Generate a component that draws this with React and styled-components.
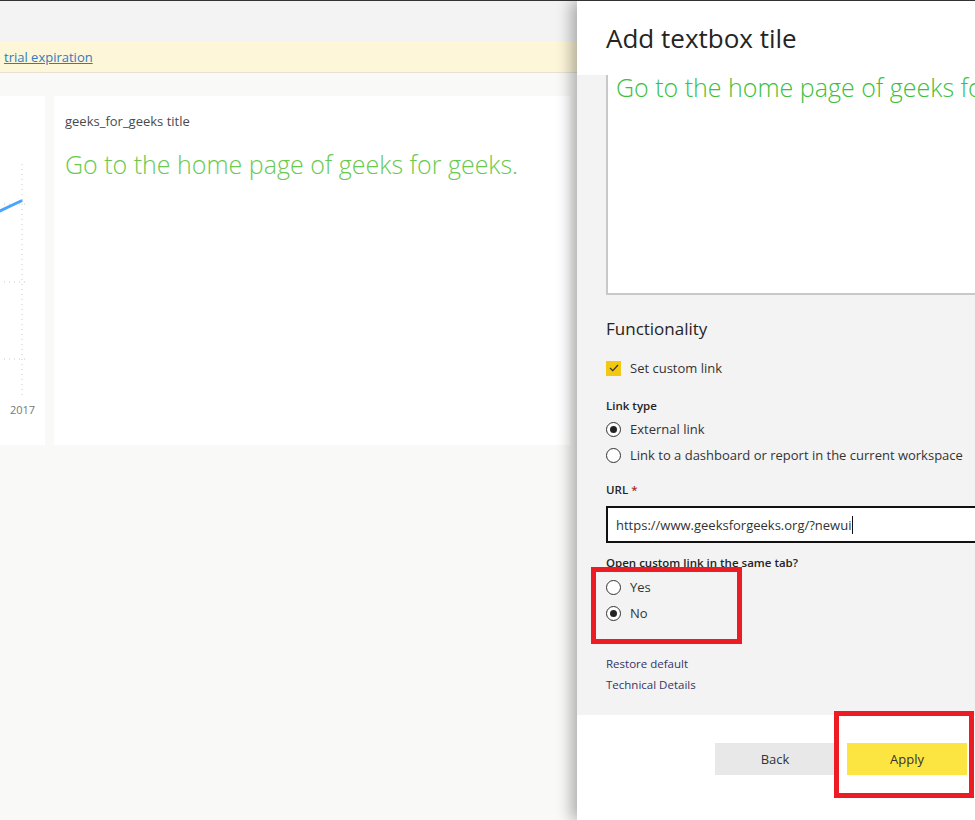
import React, { useState } from "react";
import styled, { createGlobalStyle } from "styled-components";

const GlobalStyle = createGlobalStyle`
  html, body {
    margin: 0;
    padding: 0;
    height: 100%;
    overflow: hidden;
  }
  body {
    font-family: "Open Sans", "Noto Sans", "Liberation Sans", sans-serif;
    color: #333;
  }
`;

const Screen = styled.div`
  display: flex;
  width: 975px;
  height: 820px;
  border-top: 1px solid #333;
  box-sizing: border-box;
  overflow: hidden;
`;

const Workspace = styled.div`
  flex: 0 0 577px;
  display: flex;
  flex-direction: column;
  background: #f9f9f8;
`;

const TopBar = styled.div`
  height: 40px;
  background: #f3f3f3;
`;

const Banner = styled.div`
  height: 31px;
  background: #fdf6d9;
  border-bottom: 1px solid #e6e3d6;
  display: flex;
  align-items: center;
  padding-left: 4px;
  font-size: 13px;

  a {
    color: #2f7bbf;
    text-decoration: underline;
  }
`;

const TileRow = styled.div`
  display: flex;
  gap: 9px;
  padding-top: 23px;
  height: 349px;
`;

const Tile = styled.div`
  background: #fff;
  flex: ${(p) => (p.$w ? `0 0 ${p.$w}px` : "1")};
  padding: ${(p) => (p.$w ? "0" : "16px 11px")};
  margin-right: ${(p) => (p.$w ? "0" : "7px")};
`;

const TileTitle = styled.div`
  font-size: 13px;
  color: #4a4a4a;
`;

const TileText = styled.div`
  margin-top: 17px;
  font-size: 25px;
  font-weight: 300;
  color: #69c94e;
  white-space: nowrap;
`;

const ChartSvg = styled.svg`
  display: block;
`;

const Panel = styled.div`
  flex: 0 0 398px;
  position: relative;
  display: flex;
  flex-direction: column;
  background: #fff;
  box-shadow: -6px 0 14px rgba(0, 0, 0, 0.3);
  overflow: hidden;
`;

const PanelHeader = styled.div`
  height: 74px;
  padding-left: 29px;
  display: flex;
  align-items: center;
  font-size: 26px;
  color: #252423;
  box-sizing: border-box;
`;

const PanelBody = styled.div`
  background: #f3f3f3;
  height: 640px;
  padding-left: 29px;
  box-sizing: border-box;
`;

const TextArea = styled.div`
  width: 420px;
  height: 220px;
  background: #fff;
  border-left: 2px solid #c8c8c8;
  border-bottom: 2px solid #c8c8c8;
  box-sizing: border-box;
  padding: 0 8px;
  font-size: 25px;
  font-weight: 300;
  color: #3dbf3d;
  white-space: nowrap;
  overflow: hidden;
  line-height: 24px;
`;

const SectionTitle = styled.div`
  font-size: 17px;
  margin-top: 22px;
  color: #252423;
`;

const CheckRow = styled.label`
  display: flex;
  align-items: center;
  gap: 9px;
  margin-top: 19px;
  font-size: 13px;
  color: #333;
`;

const CheckBox = styled.span`
  width: 15px;
  height: 15px;
  background: #f2c811;
  display: flex;
  align-items: center;
  justify-content: center;
`;

const FieldLabel = styled.div`
  font-size: 11.5px;
  font-weight: 600;
  color: #252423;
  margin-top: ${(p) => p.$top || 0}px;
  margin-bottom: ${(p) => p.$bottom || 0}px;

  em {
    font-style: normal;
    color: #a4262c;
  }
`;

const RadioRow = styled.label`
  display: flex;
  align-items: center;
  gap: 9px;
  height: 26px;
  font-size: 13px;
  color: #333;
  white-space: nowrap;
`;

const RadioDot = styled.span`
  width: 15px;
  height: 15px;
  border: 1px solid #333;
  border-radius: 50%;
  box-sizing: border-box;
  background: #fff;
  display: flex;
  align-items: center;
  justify-content: center;

  &::after {
    content: "";
    width: 7px;
    height: 7px;
    border-radius: 50%;
    background: ${(p) => (p.$on ? "#252423" : "transparent")};
  }
`;

const UrlInput = styled.div`
  width: 420px;
  height: 37px;
  margin-top: 9px;
  border: 2px solid #111;
  background: #fff;
  box-sizing: border-box;
  display: flex;
  align-items: center;
  padding-left: 8px;
  font-size: 13px;
  color: #333;

  span {
    border-right: 1px solid #111;
    padding-right: 1px;
    line-height: 18px;
  }
`;

const LinkText = styled.div`
  font-size: 11.5px;
  color: #333366;
  margin-top: ${(p) => p.$top}px;
`;

const Footer = styled.div`
  flex: 1;
  display: flex;
  justify-content: flex-end;
  align-items: flex-start;
  gap: 12px;
  padding: 28px 8px 0 0;
`;

const Button = styled.button`
  width: 120px;
  height: 32px;
  border: none;
  font-family: inherit;
  font-size: 13px;
  color: #333;
  background: ${(p) => (p.$primary ? "#fde541" : "#e8e8e8")};
`;

const Highlight = styled.div`
  position: absolute;
  left: ${(p) => p.$x}px;
  top: ${(p) => p.$y}px;
  width: ${(p) => p.$w}px;
  height: ${(p) => p.$h}px;
  border: 5px solid #ed1c24;
  box-sizing: border-box;
  pointer-events: none;
`;

const Chart = () => (
  <ChartSvg width="45" height="349" viewBox="0 0 45 349">
    <line x1="22" y1="68" x2="22" y2="302" stroke="#c8c8c8" strokeDasharray="1 4" />
    <line x1="4" y1="108" x2="29" y2="108" stroke="#c8c8c8" strokeDasharray="1 4" />
    <line x1="4" y1="186" x2="29" y2="186" stroke="#c8c8c8" strokeDasharray="1 4" />
    <line x1="4" y1="263" x2="29" y2="263" stroke="#c8c8c8" strokeDasharray="1 4" />
    <line x1="0" y1="115" x2="21" y2="105" stroke="#4aa3ff" strokeWidth="3" strokeLinecap="round" />
    <text x="10" y="318" fontSize="11" fill="#777" fontFamily="Open Sans, sans-serif">2017</text>
  </ChartSvg>
);

export default function App() {
  const [sameTab, setSameTab] = useState(false);

  return (
    <>
      <GlobalStyle />
      <Screen>
        <Workspace>
          <TopBar />
          <Banner>
            <a>trial expiration</a>
          </Banner>
          <TileRow>
            <Tile $w={45}>
              <Chart />
            </Tile>
            <Tile>
              <TileTitle>geeks_for_geeks title</TileTitle>
              <TileText>Go to the home page of geeks for geeks.</TileText>
            </Tile>
          </TileRow>
        </Workspace>

        <Panel>
          <PanelHeader>Add textbox tile</PanelHeader>
          <PanelBody>
            <TextArea>Go to the home page of geeks for geeks.</TextArea>
            <SectionTitle>Functionality</SectionTitle>
            <CheckRow>
              <CheckBox>
                <svg width="10" height="8" viewBox="0 0 10 8">
                  <path d="M1 4 L3.8 6.6 L9 1" fill="none" stroke="#333" strokeWidth="1.2" />
                </svg>
              </CheckBox>
              Set custom link
            </CheckRow>
            <FieldLabel $top={21} $bottom={3}>Link type</FieldLabel>
            <RadioRow>
              <RadioDot $on />
              External link
            </RadioRow>
            <RadioRow>
              <RadioDot />
              Link to a dashboard or report in the current workspace
            </RadioRow>
            <FieldLabel $top={14}>
              URL <em>*</em>
            </FieldLabel>
            <UrlInput>
              <span>https://www.geeksforgeeks.org/?newui</span>
            </UrlInput>
            <FieldLabel $top={12} $bottom={4}>Open custom link in the same tab?</FieldLabel>
            <RadioRow onClick={() => setSameTab(true)}>
              <RadioDot $on={sameTab} />
              Yes
            </RadioRow>
            <RadioRow onClick={() => setSameTab(false)}>
              <RadioDot $on={!sameTab} />
              No
            </RadioRow>
            <LinkText $top={30}>Restore default</LinkText>
            <LinkText $top={6}>Technical Details</LinkText>
          </PanelBody>
          <Footer>
            <Button>Back</Button>
            <Button $primary>Apply</Button>
          </Footer>
          <Highlight $x={14} $y={566} $w={151} $h={77} />
          <Highlight $x={257} $y={710} $w={140} $h={87} />
        </Panel>
      </Screen>
    </>
  );
}
